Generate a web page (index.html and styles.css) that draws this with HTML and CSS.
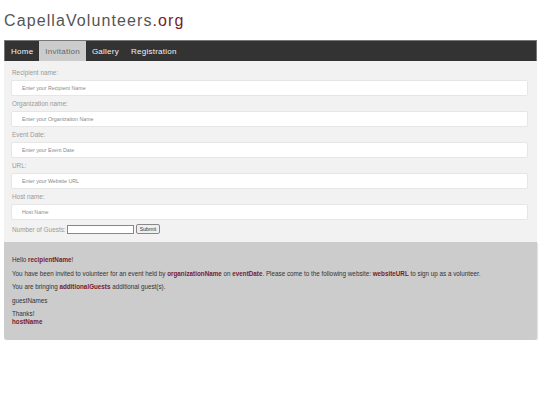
FILE: index.html
```html
<!DOCTYPE html>
<html>

<head>
	<meta charset="UTF-8">
	<title>CapellaVolunteers.org</title>
	<link rel="stylesheet" href="styles.css">
</head>

<body>
	<header class="site-title">CapellaVolunteers<span class="tld">.org</span></header>
	<nav class="menu">
		<a href="#">Home</a>
		<a href="#" class="active">Invitation</a>
		<a href="#">Gallery</a>
		<a href="#">Registration</a>
	</nav>
	<form class="invite-form">
		<label>Recipient name:</label>
		<input type="text" placeholder="Enter your Recipient Name">
		<label>Organization name:</label>
		<input type="text" placeholder="Enter your Organization Name">
		<label>Event Date:</label>
		<input type="text" placeholder="Enter your Event Date">
		<label>URL:</label>
		<input type="text" placeholder="Enter your Website URL">
		<label>Host name:</label>
		<input type="text" placeholder="Host Name">
		<div class="guests">
			<span>Number of Guests:</span>
			<input type="text" class="small">
			<button type="button">Submit</button>
		</div>
	</form>
	<section class="letter">
		<p>Hello <b>recipientName</b>!</p>
		<p>You have been invited to volunteer for an event held by <b>organizationName</b> on <b>eventDate</b>. Please come to the following website: <b>websiteURL</b> to sign up as a volunteer.</p>
		<p>You are bringing <b>additionalGuests</b> additional guest(s).</p>
		<p>guestNames</p>
		<p>Thanks!<br><b>hostName</b></p>
	</section>
</body>

</html>
```

FILE: styles.css
```css
body,
html {
	margin: 0;
	padding: 0;
	font-family: 'Liberation Sans', Arial, sans-serif;
	background: #FFFFFF;
}

* {
	box-sizing: border-box;
	outline: none;
}

body {
	padding: 0 3px 0 4px;
}

.site-title {
	height: 40px;
	padding-top: 12px;
	font-size: 16px;
	line-height: 18px;
	letter-spacing: 1.1px;
	color: #555555;
}

.site-title .tld {
	color: #7b1a2a;
}

.menu {
	display: flex;
	height: 21px;
	background: #333333;
	border: 1px solid #777777;
	border-bottom: 0 none;
}

.menu a {
	display: flex;
	align-items: center;
	padding: 0 6px;
	font-size: 8px;
	letter-spacing: .25px;
	color: #f4f4f4;
	text-decoration: none;
}

.menu a.active {
	background: #cccccc;
	color: #666666;
}

.invite-form {
	display: flex;
	flex-direction: column;
	background: #f2f2f2;
	padding: 8px 9px 8px 7px;
	margin: 0;
}

.invite-form label {
	display: block;
	font-size: 6.4px;
	line-height: 8px;
	color: #9a9a9a;
	margin: 0 0 3px 1px;
}

.invite-form input {
	height: 16px;
	margin: 0 0 4px;
	padding: 0 10px;
	border: 1px solid #e6e6e6;
	border-radius: 2px;
	background: #FFFFFF;
	font-family: 'Liberation Sans', Arial, sans-serif;
	font-size: 5.3px;
	color: #555555;
}

.invite-form input::placeholder {
	color: #8a8a8a;
}

.invite-form .guests {
	display: flex;
	align-items: center;
	height: 10px;
	font-size: 6.4px;
	color: #9a9a9a;
	margin: 0 0 0 1px;
}

.invite-form .guests span {
	margin-right: 1px;
}

.invite-form .guests input.small {
	width: 67px;
	height: 9px;
	margin: 0 2px 0 0;
	padding: 0 2px;
	border: 1px solid #888888;
	border-radius: 0;
}

.invite-form .guests button {
	height: 10px;
	padding: 0 3px;
	font-family: 'Liberation Sans', Arial, sans-serif;
	font-size: 5.3px;
	line-height: 8px;
	color: #333333;
	background: #efefef;
	border: 1px solid #888888;
	border-radius: 2px;
}

.letter {
	background: #cccccc;
	padding: 14px 8px 14px 8px;
	border-radius: 0 0 3px 3px;
	box-shadow: 1px 1px 1px #e2e2e2;
	font-size: 6.3px;
	line-height: 8px;
	color: #333333;
}

.letter p {
	margin: 0 0 5.5px;
}

.letter p:last-child {
	margin-bottom: 0;
}

.letter b {
	color: #7b1a2a;
}
```
